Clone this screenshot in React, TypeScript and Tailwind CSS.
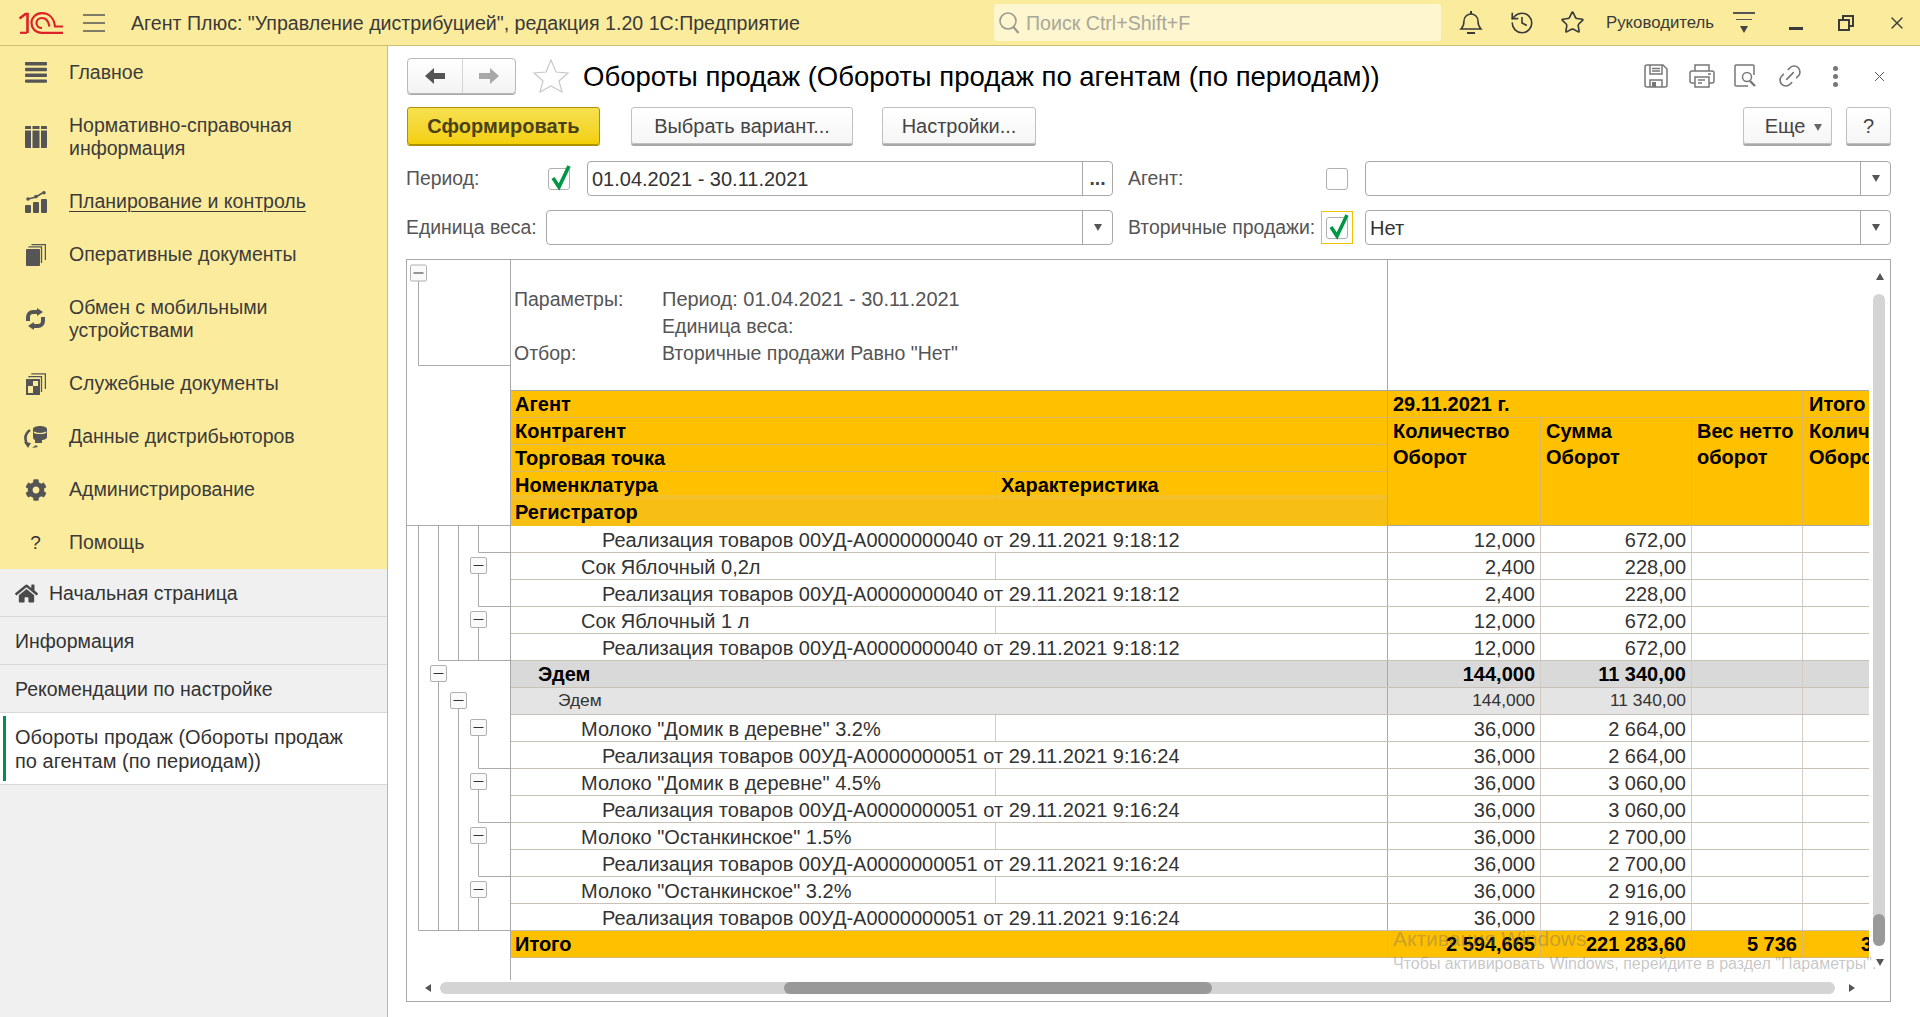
import { History, Link2, Star, X } from "lucide-react";
import { FaCog, FaHome } from "react-icons/fa";
import { ReactNode } from "react";

const ROW = "grid grid-cols-[877px_153px_151px_111px_66px] grid-rows-[26px] h-[27px] border-b";

const Logo = () => (
  <svg width="44" height="22" viewBox="0 0 44 22" fill="none" stroke="#dc2228" strokeWidth="2.2">
    <path d="M.5 6.5l6-4.500h2V21" strokeWidth="2.600" />
    <path d="M1 20.800h7" />
    <path d="M44 20.800H23C16 20.800 12.500 16 12.500 11 12.500 5.500 17 1.200 23 1.200 30 1.200 35 6 36 14.500H44" />
    <path d="M30.500 14.500C29.500 9 27 6 23 6 19.500 6 17.500 8.500 17.500 11 17.500 14 20 16 23 16" />
  </svg>
);

const Tri = ({ dir, color = "#555" }: { dir: "up" | "down" | "left" | "right"; color?: string }) => {
  const pts = { up: "0,8 4,1 8,8", down: "0,1 8,1 4,8", left: "7,0 7,8 1,4", right: "1,0 1,8 7,4" }[dir];
  return (
    <svg width="8" height="9" viewBox="0 0 8 9" className="shrink-0">
      <polygon points={pts} fill={color} />
    </svg>
  );
};

const Arrow = ({ flip, color }: { flip?: boolean; color: string }) => (
  <svg width="22" height="18" viewBox="0 0 22 18" className={flip ? "-scale-x-100" : ""}>
    <path d="M1 9l9-8v5h11v6H10v5z" fill={color} />
  </svg>
);

const Check = () => (
  <svg width="22" height="28" viewBox="0 0 22 28" fill="none" className="absolute -top-[6px] left-[1px]">
    <path d="M3 15l6 9L19 3" stroke="#009646" strokeWidth="3.6" />
  </svg>
);

const CheckBox = ({ on }: { on?: boolean }) => (
  <div className="relative w-[22px] h-[22px] rounded-[3px] border border-[#b0b0b0] bg-white">{on && <Check />}</div>
);

const Field = ({ value, btn }: { value?: string; btn: ReactNode }) => (
  <div className="flex h-[35px] flex-1 rounded-[4px] border border-[#a8a8a8] bg-white">
    <div className="flex-1 pl-[4px] text-[20px] leading-[34px] text-[#333]">{value}</div>
    <div className="flex w-[30px] items-center justify-center border-l border-[#a8a8a8] text-[#444]">{btn}</div>
  </div>
);

const GrayBtn = ({ children, w, ml }: { children: ReactNode; w: string; ml: string }) => (
  <div className={`${w} ${ml} flex h-[37px] items-center justify-center rounded-[3px] border border-[#c0c0c0] bg-gradient-to-b from-white to-[#f6f6f6] text-[20px] text-[#444] shadow-[0_2px_0_#a8a8a8]`}>
    {children}
  </div>
);

const menu = [
  { icon: <MainIcon />, lines: ["Главное"] },
  { icon: <CatalogIcon />, lines: ["Нормативно-справочная", "информация"] },
  { icon: <ChartIcon />, lines: ["Планирование и контроль"], active: true },
  { icon: <DocsIcon />, lines: ["Оперативные документы"] },
  { icon: <SyncIcon />, lines: ["Обмен с мобильными", "устройствами"] },
  { icon: <ServiceIcon />, lines: ["Служебные документы"] },
  { icon: <DataIcon />, lines: ["Данные дистрибьюторов"] },
  { icon: <FaCog size={22} color="#555" />, lines: ["Администрирование"] },
  { icon: <span className="text-[19px] leading-none text-[#333]">?</span>, lines: ["Помощь"] },
];

function MainIcon() {
  return (
    <svg width="22" height="21" viewBox="0 0 22 21" fill="#555">
      <rect y="0" width="22" height="3.4" rx="1" />
      <rect y="5.8" width="22" height="3.4" rx="1" />
      <rect y="11.6" width="22" height="3.4" rx="1" />
      <rect y="17.4" width="22" height="3.4" rx="1" />
    </svg>
  );
}
function CatalogIcon() {
  return (
    <svg width="22" height="22" viewBox="0 0 22 22" fill="#555">
      <path d="M0 1a1 1 0 0 1 1-1h5v3H0zM7.5 0h7v3h-7zM16 0h5a1 1 0 0 1 1 1v2h-6zM0 4.5h6V22H1a1 1 0 0 1-1-1zM7.5 4.5h7V22h-7zM16 4.5h6V21a1 1 0 0 1-1 1h-5z" />
    </svg>
  );
}
function ChartIcon() {
  return (
    <svg width="22" height="22" viewBox="0 0 22 22" fill="#555">
      <rect x="0" y="14" width="6" height="8" rx="1" />
      <rect x="8" y="11" width="6" height="11" rx="1" />
      <rect x="16" y="8" width="6" height="14" rx="1" />
      <path d="M3 8l8-2 8-5" stroke="#555" strokeWidth="1.6" fill="none" />
      <circle cx="3" cy="8" r="1.8" />
      <circle cx="11" cy="5.6" r="1.8" />
      <circle cx="19" cy="1.8" r="1.8" />
    </svg>
  );
}
function DocsIcon() {
  return (
    <svg width="20" height="22" viewBox="0 0 20 22" fill="none" stroke="#555">
      <rect x="0" y="5" width="14" height="17" rx="1" fill="#555" stroke="none" />
      <path d="M3 3.5V2.8h12.5V19" strokeWidth="1.3" />
      <path d="M6 1V.6h13.4V16" strokeWidth="1.3" />
    </svg>
  );
}
function SyncIcon() {
  return (
    <svg width="23" height="22" viewBox="0 0 23 22" fill="none" stroke="#555" strokeWidth="4">
      <path d="M4 13V9a5 5 0 0 1 5-5h6" />
      <path d="M19 9v4a5 5 0 0 1-5 5H8" />
      <path d="M13 0l6 4-6 4zM10 14l-6 4 6 4z" fill="#555" stroke="none" />
    </svg>
  );
}
function ServiceIcon() {
  return (
    <svg width="20" height="22" viewBox="0 0 20 22" fill="none" stroke="#555">
      <path fillRule="evenodd" d="M0 6h14v16H0zM2 13h5v7H2zM7 8h5v5H7z" fill="#555" stroke="none" />
      <path d="M3 4.5V3.7h12.5V19" strokeWidth="1.3" />
      <path d="M6 1.5V.8h13.4V16" strokeWidth="1.3" />
    </svg>
  );
}
function DataIcon() {
  return (
    <svg width="24" height="22" viewBox="0 0 24 22" fill="#555">
      <path d="M9 3c0-4 14-4 14 0v8c0 2-3 3-5 3v3h-7v-3c-1 0-2-2-2-3z" />
      <path d="M10 6c2 2 10 2 12 0" stroke="#fbec9d" strokeWidth="1.2" fill="none" />
      <path d="M6 4C2 7 0 12 3 18" stroke="#555" strokeWidth="2.6" fill="none" />
      <path d="M0 16l7 1-3 5zM8 22l6-1-2-2z" />
    </svg>
  );
}

const Sidebar = () => (
  <aside className="flex w-[388px] shrink-0 flex-col border-r border-[#c9bd7c] bg-[#f0f0f0] text-[#333]">
    <nav className="bg-[#fbec9d]">
      {menu.map((m) => (
        <div key={m.lines[0]} className="flex items-center py-[15px] text-[19.5px] leading-[23px] text-[#3b3b3b]">
          <div className="flex w-[69px] justify-center pl-[3px] pr-[1px]">{m.icon}</div>
          <div className={m.active ? "underline underline-offset-[3px] decoration-1" : ""}>
            {m.lines.map((l) => (
              <div key={l}>{l}</div>
            ))}
          </div>
        </div>
      ))}
    </nav>
    <div className="flex h-[48px] items-center gap-[11px] border-b border-[#d9d9d9] pl-[15px] pt-[2px] text-[19.5px]">
      <FaHome size={23} color="#4a4a4a" />
      <span>Начальная страница</span>
    </div>
    <div className="flex h-[48px] items-center border-b border-[#d9d9d9] pl-[15px] pt-[2px] text-[19.5px]">Информация</div>
    <div className="flex h-[48px] items-center border-b border-[#d9d9d9] pl-[15px] pt-[2px] text-[19.5px]">Рекомендации по настройке</div>
    <div className="flex h-[72px] items-center border-b border-[#d9d9d9] bg-white pl-[3px] text-[20px] leading-[24px]">
      <div className="mr-[9px] h-[65px] w-[3px] bg-[#00904a]" />
      <div>
        <div>Обороты продаж (Обороты продаж</div>
        <div>по агентам (по периодам))</div>
      </div>
    </div>
  </aside>
);

const TopBar = () => (
  <header className="flex h-[46px] shrink-0 items-center border-b border-[#cdbf72] bg-[#fbec9d] text-[#3a3a3a]">
    <div className="ml-[19px] w-[44px]">
      <Logo />
    </div>
    <svg width="22" height="18" viewBox="0 0 22 18" stroke="#555" strokeWidth="1.6" className="ml-[20px]">
      <path d="M0 1h22M0 9h22M0 17h22" />
    </svg>
    <div className="ml-[26px] mt-[2px] w-[863px] whitespace-nowrap text-[19.6px]">Агент Плюс: "Управление дистрибуцией", редакция 1.20 1С:Предприятие</div>
    <div className="flex h-[37px] w-[447px] items-center rounded-[3px] bg-[#fdf6ce] pl-[3px] text-[19.6px] text-[#a9a79a]">
      <svg width="24" height="24" viewBox="0 0 24 24" fill="none" stroke="#9a9a92" strokeWidth="1.6">
        <circle cx="11" cy="10" r="8" />
        <path d="M16.5 16l5 6" strokeWidth="2.2" />
      </svg>
      <span className="ml-[5px] mt-[2px]">Поиск Ctrl+Shift+F</span>
    </div>
    <div className="ml-[4px] flex w-[51px] justify-center">
      <svg width="24" height="26" viewBox="0 0 24 26" fill="none" stroke="#3a3a3a" strokeWidth="1.5">
        <path d="M2 19c2-2 3-4 3-8a7 7 0 0 1 14 0c0 4 1 6 3 8z" />
        <path d="M12 4V1M8 23h8" strokeWidth="2" />
      </svg>
    </div>
    <div className="flex w-[51px] justify-center">
      <History size={26} strokeWidth={1.5} color="#3a3a3a" />
    </div>
    <div className="flex w-[51px] justify-center">
      <Star size={25} strokeWidth={1.6} color="#3a3a3a" />
    </div>
    <div className="ml-[8px] w-[107px] text-[16.8px] whitespace-nowrap">Руководитель</div>
    <div className="ml-[20px] flex w-[22px] flex-col items-center gap-[5px]">
      <div className="h-[2px] w-[22px] bg-[#555]" />
      <div className="h-[1px] w-[16px] bg-[#555]" />
      <Tri dir="down" color="#444" />
    </div>
    <div className="ml-[34px] h-[3px] w-[14px] translate-y-[6px] bg-[#3a3a3a]" />
    <svg width="16" height="16" viewBox="0 0 16 16" fill="none" stroke="#3a3a3a" strokeWidth="2" className="ml-[35px]">
      <rect x="1" y="5" width="10" height="10" />
      <path d="M5 4V1h10v10h-3" />
    </svg>
    <X size={20} strokeWidth={1.6} color="#3a3a3a" className="ml-[33px]" />
  </header>
);

const TitleRow = () => (
  <div className="ml-[1px] mt-[12px] flex h-[36px] items-center">
    <div className="flex h-[36px] w-[109px] rounded-[4px] border border-[#b8b8b8] bg-gradient-to-b from-white to-[#f3f3f3] shadow-[0_1px_0_#a8a8a8]">
      <div className="flex w-[55px] items-center justify-center border-r border-[#d5d5d5]">
        <Arrow color="#555" />
      </div>
      <div className="flex flex-1 items-center justify-center">
        <Arrow flip color="#a8a8a8" />
      </div>
    </div>
    <svg width="36" height="34" viewBox="0 0 36 34" fill="none" stroke="#c8c8c8" strokeWidth="1.2" className="ml-[17px]">
      <path d="M18 1l5 12 12 1-9 8 3 11-11-6-11 6 3-11-9-8 12-1z" />
    </svg>
    <h1 className="ml-[14px] mt-[2px] whitespace-nowrap text-[27.5px] font-normal leading-none text-black">Обороты продаж (Обороты продаж по агентам (по периодам))</h1>
    <div className="ml-auto flex h-[26px] items-center text-[#777]">
      <svg width="24" height="24" viewBox="0 0 24 24" fill="none" stroke="#777" strokeWidth="1.5">
        <path d="M1 3a2 2 0 0 1 2-2h16l4 4v16a2 2 0 0 1-2 2H3a2 2 0 0 1-2-2z" />
        <path d="M6 1v9h12V1M8 4.500h8M8 7h8" />
        <path d="M6 23v-7h12v7" />
        <rect x="8" y="18" width="4" height="5" fill="#777" stroke="none" />
      </svg>
      <svg width="26" height="24" viewBox="0 0 26 24" fill="none" stroke="#777" strokeWidth="1.5" className="ml-[21px]">
        <path d="M6 7V1h14v6M6 19H3a2 2 0 0 1-2-2V9a2 2 0 0 1 2-2h20a2 2 0 0 1 2 2v8a2 2 0 0 1-2 2h-3" />
        <path d="M6 13h14v10H6zM9 16h7M9 19h4M19 10h3" />
      </svg>
      <svg width="24" height="24" viewBox="0 0 24 24" fill="none" stroke="#777" strokeWidth="1.5" className="ml-[19px]">
        <path d="M14 22H2a1 1 0 0 1-1-1V2a1 1 0 0 1 1-1h17a1 1 0 0 1 1 1v9" />
        <circle cx="13" cy="13" r="4.500" />
        <path d="M16 17l5 5" strokeWidth="2.4" />
      </svg>
      <Link2 size={28} strokeWidth={1.4} color="#777" className="ml-[18px] -rotate-45" />
      <div className="ml-[29px] flex flex-col gap-[3px]">
        <div className="h-[5px] w-[5px] rounded-full bg-[#777]" />
        <div className="h-[5px] w-[5px] rounded-full bg-[#777]" />
        <div className="h-[5px] w-[5px] rounded-full bg-[#777]" />
      </div>
      <X size={17} strokeWidth={1.4} color="#555" className="ml-[33px] mr-[3px]" />
    </div>
  </div>
);

const ActionRow = () => (
  <div className="ml-[1px] mt-[13px] flex h-[38px]">
    <div className="flex h-[38px] w-[193px] items-center justify-center rounded-[3px] border border-[#ad9200] bg-gradient-to-b from-[#f7e14e] to-[#f3cf00] text-[20px] font-bold text-[#4a4215] shadow-[0_1px_0_#ad9200]">
      Сформировать
    </div>
    <GrayBtn w="w-[222px]" ml="ml-[31px]">Выбрать вариант...</GrayBtn>
    <GrayBtn w="w-[154px]" ml="ml-[29px]">Настройки...</GrayBtn>
    <GrayBtn w="w-[89px]" ml="ml-auto">
      <span className="ml-[12px]">Еще</span>
      <span className="ml-[9px] mt-[3px]">
        <Tri dir="down" color="#666" />
      </span>
    </GrayBtn>
    <GrayBtn w="w-[45px]" ml="ml-[14px]">?</GrayBtn>
  </div>
);

const FilterRows = () => (
  <div className="text-[19.4px] text-[#555]">
    <div className="mt-[16px] flex h-[35px] items-center">
      <div className="w-[142px]">Период:</div>
      <CheckBox on />
      <div className="ml-[17px] flex w-[526px]">
        <Field value="01.04.2021 - 30.11.2021" btn={<span className="font-bold">...</span>} />
      </div>
      <div className="ml-[15px] w-[198px]">Агент:</div>
      <CheckBox />
      <div className="ml-[17px] flex flex-1">
        <Field btn={<Tri dir="down" />} />
      </div>
    </div>
    <div className="mt-[14px] flex h-[35px] items-center">
      <div className="w-[140px] whitespace-nowrap">Единица веса:</div>
      <div className="flex w-[567px]">
        <Field btn={<Tri dir="down" />} />
      </div>
      <div className="ml-[15px] w-[193px] whitespace-nowrap">Вторичные продажи:</div>
      <div className="flex h-[33px] w-[32px] items-center justify-center border border-[#f2c200]">
        <CheckBox on />
      </div>
      <div className="ml-[12px] flex flex-1">
        <Field value="Нет" btn={<Tri dir="down" />} />
      </div>
    </div>
  </div>
);

const L = (k: number) => 265.5 + 27 * k;
const BoxMark = ({ x, y }: { x: number; y: number }) => (
  <g>
    <rect x={x - 8} y={y} width="16" height="16" rx="1.5" fill="#fafafa" stroke="#b0b0b0" />
    <path d={`M${x - 5} ${y + 8}h10`} stroke="#333" />
  </g>
);

// tree lines left of the report; row r spans L(r-1)..L(r)
const TreeGutter = () => {
  const rowBox = (r: number) => L(r - 1) + 5;
  return (
    <svg width="103" height="720" viewBox="0 0 103 720" fill="none" stroke="#aaaaaa" className="shrink-0">
      <path d="M11.5 6V105.500H103" />
      <path d={`M0 ${L(0)}H103`} />
      <path d={`M11.5 ${L(0)}V${L(15)}H103`} />
      <path d={`M31.5 ${L(0)}V${L(5)}H103`} />
      <path d={`M51.5 ${L(0)}V${L(5)}`} />
      <path d={`M71.5 ${L(0)}V${L(1)}H103`} />
      <path d={`M71.5 ${rowBox(2)}V${L(3)}H103`} />
      <path d={`M71.500 ${rowBox(4)}V${L(5)}`} />
      <path d={`M31.5 ${rowBox(6)}V${L(15)}`} />
      <path d={`M51.5 ${rowBox(7)}V${L(15)}`} />
      {[8, 10, 12].map((r) => (
        <path key={r} d={`M71.5 ${rowBox(r)}V${L(r + 1)}H103`} />
      ))}
      <path d={`M71.5 ${rowBox(14)}V${L(15)}`} />
      <BoxMark x={11.5} y={5} />
      {[2, 4, 8, 10, 12, 14].map((r) => (
        <BoxMark key={r} x={71.5} y={rowBox(r)} />
      ))}
      <BoxMark x={31.5} y={rowBox(6)} />
      <BoxMark x={51.5} y={rowBox(7)} />
    </svg>
  );
};

const real40 = "Реализация товаров 00УД-А0000000040 от 29.11.2021 9:18:12";
const real51 = "Реализация товаров 00УД-А0000000051 от 29.11.2021 9:16:24";
type Row = { t: string; q: string; s: string; kind: "doc" | "item" | "group" | "sub" };
const rows: Row[] = [
  { t: real40, q: "12,000", s: "672,00", kind: "doc" },
  { t: "Сок Яблочный 0,2л", q: "2,400", s: "228,00", kind: "item" },
  { t: real40, q: "2,400", s: "228,00", kind: "doc" },
  { t: "Сок Яблочный 1 л", q: "12,000", s: "672,00", kind: "item" },
  { t: real40, q: "12,000", s: "672,00", kind: "doc" },
  { t: "Эдем", q: "144,000", s: "11 340,00", kind: "group" },
  { t: "Эдем", q: "144,000", s: "11 340,00", kind: "sub" },
  { t: 'Молоко "Домик в деревне" 3.2%', q: "36,000", s: "2 664,00", kind: "item" },
  { t: real51, q: "36,000", s: "2 664,00", kind: "doc" },
  { t: 'Молоко "Домик в деревне" 4.5%', q: "36,000", s: "3 060,00", kind: "item" },
  { t: real51, q: "36,000", s: "3 060,00", kind: "doc" },
  { t: 'Молоко "Останкинское" 1.5%', q: "36,000", s: "2 700,00", kind: "item" },
  { t: real51, q: "36,000", s: "2 700,00", kind: "doc" },
  { t: 'Молоко "Останкинское" 3.2%', q: "36,000", s: "2 916,00", kind: "item" },
  { t: real51, q: "36,000", s: "2 916,00", kind: "doc" },
];

const DataRow = ({ r }: { r: Row }) => {
  const bg = r.kind === "group" ? "bg-[#d9d9d9]" : r.kind === "sub" ? "bg-[#e4e4e4]" : "bg-white";
  const text =
    r.kind === "group"
      ? "font-bold text-black text-[20px] leading-[26px]"
      : r.kind === "sub"
        ? "text-[#333] text-[17.4px] leading-[24px]"
        : "text-[#333] text-[20px] leading-[26px]";
  const pad = { doc: "pl-[91px]", item: "pl-[70px]", group: "pl-[27px]", sub: "pl-[47px]" }[r.kind];
  const top = r.kind === "doc" || r.kind === "item" ? "pt-[1px]" : "";
  return (
    <div className={`${ROW} border-[#c9c1b5] ${bg} ${text}`}>
      <div className="flex border-r border-[#a8a8a8]">
        <div className={`w-[485px] whitespace-nowrap ${pad} ${top} ${r.kind === "item" ? "border-r border-[#d2ccc2]" : ""}`}>{r.t}</div>
      </div>
      <div className={`border-r border-[#d2ccc2] pr-[5px] text-right ${top}`}>{r.q}</div>
      <div className={`border-r border-[#d2ccc2] pr-[5px] text-right ${top}`}>{r.s}</div>
      <div className="border-r border-[#d2ccc2]" />
      <div />
    </div>
  );
};

const HEAD = "grid grid-cols-[485px_392px] border-b border-[#d9b968] h-[27px] pl-[4px]";

const ReportTable = () => (
  <div className="h-[720px] w-[1359px] shrink-0 overflow-hidden border-l border-[#a8a8a8]">
    <div className="grid h-[131px] grid-cols-[877px_1fr] border-b border-[#a8a8a8] text-[19.5px] text-[#555]">
      <div className="border-r border-[#a8a8a8] pt-[26px] pl-[3px] leading-[27px]">
        <div className="grid grid-cols-[148px_1fr]">
          <div>Параметры:</div>
          <div className="text-[20px]">Период: 01.04.2021 - 30.11.2021</div>
          <div />
          <div>Единица веса:</div>
          <div>Отбор:</div>
          <div>Вторичные продажи Равно "Нет"</div>
        </div>
      </div>
      <div />
    </div>
    <div className="grid h-[135px] grid-cols-[877px_153px_151px_111px_66px] grid-rows-[27px_108px] border-b border-[#a8a8a8] bg-[#ffc000] text-[20px] font-bold leading-[26px] text-black">
      <div className="row-span-2 border-r border-[#a8a8a8]">
        <div className={HEAD}>Агент</div>
        <div className={HEAD}>Контрагент</div>
        <div className={HEAD}>Торговая точка</div>
        <div className="grid h-[27px] grid-cols-[481px_1fr] border-b-4 border-[#f3c12d] pl-[4px]">
          <div className="h-[26px] border-r border-[#d9b968]">Номенклатура</div>
          <div className="pl-[5px]">Характеристика</div>
        </div>
        <div className="h-[27px] bg-[#f7bf14] pl-[4px]">Регистратор</div>
      </div>
      <div className="col-span-3 border-r border-b border-[#d9b968] pl-[5px]">29.11.2021 г.</div>
      <div className="border-b border-[#d9b968] pl-[6px]">Итого</div>
      <div className="border-r border-[#d9b968] pl-[5px]">
        Количество
        <br />
        Оборот
      </div>
      <div className="border-r border-[#d9b968] pl-[5px]">
        Сумма
        <br />
        Оборот
      </div>
      <div className="border-r border-[#d9b968] pl-[5px]">
        Вес нетто
        <br />
        оборот
      </div>
      <div className="overflow-hidden whitespace-nowrap pl-[6px]">
        Количество
        <br />
        Оборот
      </div>
    </div>
    {rows.map((r, i) => (
      <DataRow key={i} r={r} />
    ))}
    <div className={`${ROW} border-[#d9b968] bg-[#ffc000] text-[20px] font-bold leading-[26px] text-black`}>
      <div className="border-r border-[#d9b968] pl-[4px]">Итого</div>
      <div className="border-r border-[#d9b968] pr-[5px] text-right">2 594,665</div>
      <div className="border-r border-[#d9b968] pr-[5px] text-right">221 283,60</div>
      <div className="border-r border-[#d9b968] pr-[5px] text-right">5 736</div>
      <div className="overflow-hidden pl-[58px]">3</div>
    </div>
  </div>
);

const VScroll = () => (
  <div className="flex w-[21px] flex-col items-center pt-[12px]">
    <Tri dir="up" />
    <div className="ml-[-1px] mt-[13px] flex h-[652px] w-[12px] flex-col justify-end rounded-full bg-[#d4d4d4]">
      <div className="h-[32px] rounded-full bg-[#999]" />
    </div>
    <div className="mt-[12px]">
      <Tri dir="down" />
    </div>
  </div>
);

const HScroll = () => (
  <div className="flex h-[21px] items-center pb-[5px]">
    <div className="flex w-[33px] justify-end pr-[8px]">
      <Tri dir="left" />
    </div>
    <div className="flex h-[12px] w-[1395px] rounded-full bg-[#d4d4d4]">
      <div className="ml-[344px] h-full w-[428px] rounded-full bg-[#999]" />
    </div>
    <div className="ml-[13px]">
      <Tri dir="right" />
    </div>
  </div>
);

const Report = () => (
  <div className="mt-[14px] flex h-[743px] flex-col border border-[#a8a8a8]">
    <div className="flex h-[720px]">
      <TreeGutter />
      <ReportTable />
      <VScroll />
    </div>
    <HScroll />
  </div>
);

export default function App() {
  return (
    <div className="relative flex h-screen w-screen flex-col overflow-hidden bg-white font-['Liberation_Sans',Arial,sans-serif]">
      <TopBar />
      <div className="flex flex-1">
        <Sidebar />
        <main className="flex-1 pl-[18px] pr-[29px]">
          <TitleRow />
          <ActionRow />
          <FilterRows />
          <Report />
        </main>
      </div>
      <div className="pointer-events-none absolute left-[1393px] top-[926px] text-[#6f6f6f]/40">
        <div className="text-[21px] leading-[26px]">Активация Windows</div>
        <div className="text-[16px] leading-[24px]">Чтобы активировать Windows, перейдите в раздел "Параметры".</div>
      </div>
    </div>
  );
}
